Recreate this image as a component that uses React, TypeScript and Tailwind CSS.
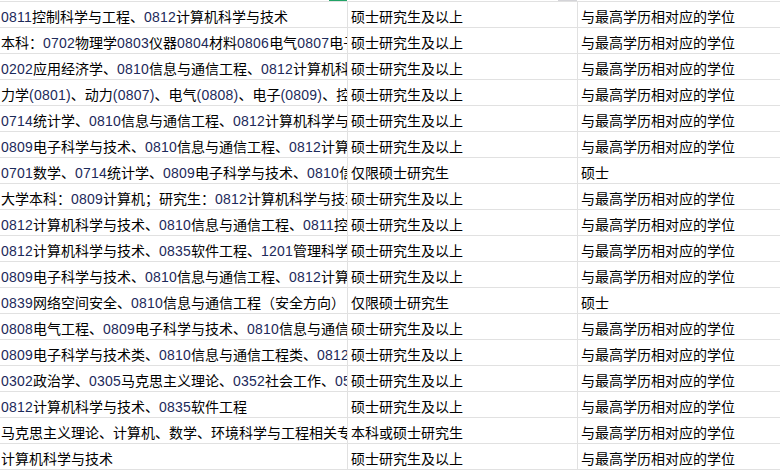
import React from "react";

const rows: [string, string, string][] = [
  ["0811控制科学与工程、0812计算机科学与技术", "硕士研究生及以上", "与最高学历相对应的学位"],
  ["本科：0702物理学0803仪器0804材料0806电气0807电子0809计算机", "硕士研究生及以上", "与最高学历相对应的学位"],
  ["0202应用经济学、0810信息与通信工程、0812计算机科学与技术", "硕士研究生及以上", "与最高学历相对应的学位"],
  ["力学(0801)、动力(0807)、电气(0808)、电子(0809)、控制(0811)", "硕士研究生及以上", "与最高学历相对应的学位"],
  ["0714统计学、0810信息与通信工程、0812计算机科学与技术", "硕士研究生及以上", "与最高学历相对应的学位"],
  ["0809电子科学与技术、0810信息与通信工程、0812计算机科学与技术", "硕士研究生及以上", "与最高学历相对应的学位"],
  ["0701数学、0714统计学、0809电子科学与技术、0810信息与通信工程", "仅限硕士研究生", "硕士"],
  ["大学本科：0809计算机；研究生：0812计算机科学与技术", "硕士研究生及以上", "与最高学历相对应的学位"],
  ["0812计算机科学与技术、0810信息与通信工程、0811控制科学与工程", "硕士研究生及以上", "与最高学历相对应的学位"],
  ["0812计算机科学与技术、0835软件工程、1201管理科学与工程", "硕士研究生及以上", "与最高学历相对应的学位"],
  ["0809电子科学与技术、0810信息与通信工程、0812计算机科学与技术", "硕士研究生及以上", "与最高学历相对应的学位"],
  ["0839网络空间安全、0810信息与通信工程（安全方向）", "仅限硕士研究生", "硕士"],
  ["0808电气工程、0809电子科学与技术、0810信息与通信工程", "硕士研究生及以上", "与最高学历相对应的学位"],
  ["0809电子科学与技术类、0810信息与通信工程类、0812计算机科学与技术类", "硕士研究生及以上", "与最高学历相对应的学位"],
  ["0302政治学、0305马克思主义理论、0352社会工作、0503新闻传播学", "硕士研究生及以上", "与最高学历相对应的学位"],
  ["0812计算机科学与技术、0835软件工程", "硕士研究生及以上", "与最高学历相对应的学位"],
  ["马克思主义理论、计算机、数学、环境科学与工程相关专业", "本科或硕士研究生", "与最高学历相对应的学位"],
  ["计算机科学与技术", "硕士研究生及以上", "与最高学历相对应的学位"],
];

function Rich({ text }: { text: string }) {
  const parts = text.split(/([\x20-\x7e]+)/).filter((p) => p.length > 0);
  return (
    <>
      {parts.map((p, i) =>
        /^[\x20-\x7e]+$/.test(p) ? (
          <span key={i} className="text-[#1c2a5a] tracking-[0.22px]">
            {p}
          </span>
        ) : (
          <span key={i}>{p}</span>
        )
      )}
    </>
  );
}

export default function App() {
  return (
    <div
      className="w-[780px] h-[471px] overflow-hidden bg-white text-[14px] text-black"
      style={{ fontFamily: '"Liberation Sans", "Noto Sans CJK SC", sans-serif' }}
    >
      <div className="relative h-[1px]">
        <div className="absolute left-[329px] top-0 h-[1px] w-[18px] bg-[#21a366]" />
        <div className="absolute left-[558px] top-0 h-[1px] w-[19px] bg-[#d4d4d8]" />
      </div>
      <div className="border-t border-[#e1e1e1]">
        {rows.map((r, i) => (
          <div key={i} className="flex h-[26px] border-b border-[#e1e1e1]">
            <div className="w-[348px] shrink-0 border-r border-[#e1e1e1] overflow-hidden whitespace-nowrap flex items-end pl-[1px] pb-[1px] leading-[18px]">
              <span>
                <Rich text={r[0]} />
              </span>
            </div>
            <div className="w-[230px] shrink-0 border-r border-[#e1e1e1] overflow-hidden whitespace-nowrap flex items-end pl-[3px] pb-[1px] leading-[18px]">
              {r[1]}
            </div>
            <div className="flex-1 overflow-hidden whitespace-nowrap flex items-end pl-[3px] pb-[1px] leading-[18px]">
              {r[2]}
            </div>
          </div>
        ))}
      </div>
    </div>
  );
}
